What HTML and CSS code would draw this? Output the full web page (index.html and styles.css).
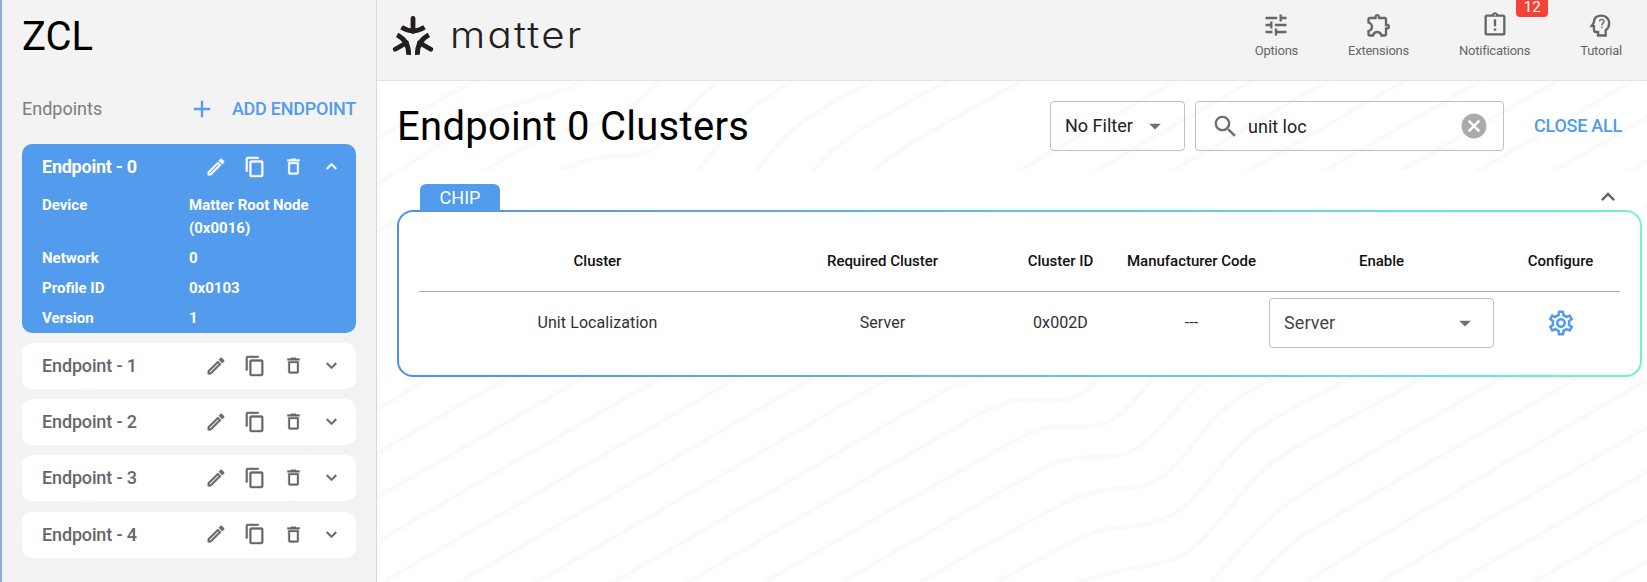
FILE: index.html
```html
<!DOCTYPE html>
<html lang="en">
<head>
<meta charset="utf-8">
<title>ZCL</title>
<link rel="stylesheet" href="styles.css">
</head>
<body>
<svg class="symbols" aria-hidden="true">
  <symbol id="edit" viewBox="0 0 24 24"><path d="M14.06 9.02l.92.92L5.92 19H5v-.92l9.06-9.06M17.66 3c-.25 0-.51.1-.7.29l-1.83 1.83 3.75 3.75 1.83-1.83c.39-.39.39-1.02 0-1.41l-2.34-2.34c-.2-.2-.45-.29-.71-.29zm-3.6 3.19L3 17.25V21h3.75L17.81 9.94l-3.75-3.75z"/></symbol>
  <symbol id="copy" viewBox="0 0 24 24"><path d="M16 1H4c-1.1 0-2 .9-2 2v14h2V3h12V1zm3 4H8c-1.1 0-2 .9-2 2v14c0 1.1.9 2 2 2h11c1.1 0 2-.9 2-2V7c0-1.1-.9-2-2-2zm0 16H8V7h11v14z"/></symbol>
  <symbol id="trash" viewBox="0 0 24 24"><path d="M6 19c0 1.1.9 2 2 2h8c1.1 0 2-.9 2-2V7H6v12zM8 9h8v10H8V9zm7.5-5l-1-1h-5l-1 1H5v2h14V4h-3.500z"/></symbol>
  <symbol id="down" viewBox="0 0 24 24"><path d="M7.410 8.590L12 13.170l4.590-4.580L18 10l-6 6-6-6 1.410-1.410z"/></symbol>
  <symbol id="up" viewBox="0 0 24 24"><path d="M7.410 15.410L12 10.830l4.590 4.580L18 14l-6-6-6 6z"/></symbol>
  <symbol id="caret" viewBox="0 0 24 24"><path d="M7 10l5 5 5-5z"/></symbol>
</svg>
<div class="app">
  <svg class="waves" viewBox="0 0 1647 582" aria-hidden="true"><g id="waves"></g></svg>
  <aside class="sidebar">
    <h1 class="brand">ZCL</h1>
    <div class="list-head">
      <span class="list-title">Endpoints</span>
      <button class="add"><svg class="plus" viewBox="0 0 24 24"><path d="M19 13h-6v6h-2v-6H5v-2h6V5h2v6h6v2z"/></svg>ADD ENDPOINT</button>
    </div>
    <section class="endpoint active">
      <div class="endpoint-head"><span class="name">Endpoint - 0</span><svg class="i-edit"><use href="#edit"/></svg><svg class="i-copy"><use href="#copy"/></svg><svg class="i-trash"><use href="#trash"/></svg><svg class="i-arrow"><use href="#up"/></svg></div>
      <dl class="details">
        <dt>Device</dt><dd>Matter Root Node (0x0016)</dd>
        <dt>Network</dt><dd>0</dd>
        <dt>Profile ID</dt><dd>0x0103</dd>
        <dt>Version</dt><dd>1</dd>
      </dl>
    </section>
    <section class="endpoint"><div class="endpoint-head"><span class="name">Endpoint - 1</span><svg class="i-edit"><use href="#edit"/></svg><svg class="i-copy"><use href="#copy"/></svg><svg class="i-trash"><use href="#trash"/></svg><svg class="i-arrow"><use href="#down"/></svg></div></section>
    <section class="endpoint"><div class="endpoint-head"><span class="name">Endpoint - 2</span><svg class="i-edit"><use href="#edit"/></svg><svg class="i-copy"><use href="#copy"/></svg><svg class="i-trash"><use href="#trash"/></svg><svg class="i-arrow"><use href="#down"/></svg></div></section>
    <section class="endpoint"><div class="endpoint-head"><span class="name">Endpoint - 3</span><svg class="i-edit"><use href="#edit"/></svg><svg class="i-copy"><use href="#copy"/></svg><svg class="i-trash"><use href="#trash"/></svg><svg class="i-arrow"><use href="#down"/></svg></div></section>
    <section class="endpoint"><div class="endpoint-head"><span class="name">Endpoint - 4</span><svg class="i-edit"><use href="#edit"/></svg><svg class="i-copy"><use href="#copy"/></svg><svg class="i-trash"><use href="#trash"/></svg><svg class="i-arrow"><use href="#down"/></svg></div></section>
  </aside>
  <main class="main">
    <header class="topbar">
      <svg class="logo" viewBox="0 0 42 40"><g id="arm" fill="none" stroke="#231f20" stroke-width="4.800"><path d="M21 3.500v13" stroke-linecap="round"/><path d="M9.500 12.300Q21 19.500 32.500 12.300"/></g><use href="#arm" transform="rotate(120 21 24)"/><use href="#arm" transform="rotate(240 21 24)"/></svg>
      <span class="wordmark">matter</span>
      <nav class="tools">
        <a class="tool"><svg viewBox="0 0 24 24"><path d="M3 17v2h6v-2H3zM3 5v2h10V5H3zm10 16v-2h8v-2h-8v-2h-2v6h2zM7 9v2H3v2h4v2h2V9H7zm14 4v-2H11v2h10zm-6-4h2V7h4V5h-4V3h-2v6z"/></svg>Options</a>
        <a class="tool"><svg viewBox="0 0 24 24"><path d="M10.500 4.500c.28 0 .5.220.5.500v2h6v6h2c.28 0 .5.220.5.500s-.220.500-.5.500h-2v6h-2.120c-.680-1.750-2.390-3-4.380-3s-3.700 1.250-4.380 3H4v-2.120c1.750-.680 3-2.390 3-4.380 0-1.990-1.240-3.700-2.990-4.380L4 7h6V5c0-.280.220-.5.500-.5m0-2C9.120 2.500 8 3.620 8 5H4c-1.100 0-1.990.9-1.990 2v3.800h.29c1.490 0 2.700 1.210 2.700 2.700s-1.210 2.700-2.700 2.700H2V20c0 1.100.9 2 2 2h3.800v-.3c0-1.490 1.210-2.700 2.700-2.700s2.700 1.210 2.700 2.700v.3H17c1.100 0 2-.9 2-2v-4c1.380 0 2.500-1.120 2.500-2.500S20.380 11 19 11V7c0-1.100-.9-2-2-2h-4c0-1.380-1.120-2.500-2.500-2.500z"/></svg>Extensions</a>
        <a class="tool"><svg viewBox="0 0 24 24"><path d="M11 15h2v2h-2zm0-8h2v6h-2zm8-4h-4.180C14.400 1.840 13.300 1 12 1s-2.400.84-2.820 2H5c-1.100 0-2 .9-2 2v14c0 1.100.9 2 2 2h14c1.100 0 2-.9 2-2V5c0-1.100-.9-2-2-2zm-7-.25c.41 0 .75.340.75.750s-.340.750-.750.750-.750-.340-.750-.750.340-.750.750-.750zM19 19H5V5h14v14z"/></svg>Notifications<span class="badge">12</span></a>
        <a class="tool"><svg viewBox="0 0 24 24"><path d="M9.500 21v-3H8q-2 0-2-2v-3H4l2-3.500C6 5.500 9 4 12.500 4c4 0 6.500 3 6.500 6.500 0 3-1.300 4.700-3 6V21z" fill="none" stroke="currentColor" stroke-width="2"/><path d="M10.800 9c.1-2.500 3.800-2.400 3.700 0 0 1.500-1.800 1.700-1.800 3.500M12.700 13.500v1.200" fill="none" stroke="currentColor" stroke-width="1.200"/></svg>Tutorial</a>
      </nav>
    </header>
    <div class="titlebar">
      <h2 class="title">Endpoint 0 Clusters</h2>
      <div class="field filter"><span>No Filter</span><svg><use href="#caret"/></svg></div>
      <div class="field search"><svg class="magnifier" viewBox="0 0 24 24"><path d="M15.500 14h-.790l-.280-.270C15.410 12.590 16 11.110 16 9.500 16 5.910 13.090 3 9.500 3S3 5.910 3 9.500 5.910 16 9.500 16c1.610 0 3.090-.590 4.230-1.570l.270.280v.790l5 4.990L20.490 19l-4.990-5zm-6 0C7.010 14 5 11.990 5 9.500S7.010 5 9.500 5 14 7.010 14 9.500 11.990 14 9.500 14z"/></svg><span>unit loc</span><svg class="clear" viewBox="0 0 24 24"><path d="M12 2C6.470 2 2 6.470 2 12s4.470 10 10 10 10-4.470 10-10S17.530 2 12 2zm5 13.590L15.590 17 12 13.410 8.410 17 7 15.590 10.590 12 7 8.410 8.410 7 12 10.590 15.590 7 17 8.410 13.410 12 17 15.590z"/></svg></div>
      <button class="close-all">CLOSE ALL</button>
    </div>
    <div class="domain">
      <div class="domain-head"><span class="tab">CHIP</span><svg><use href="#up"/></svg></div>
      <div class="card"><div class="card-body">
        <div class="row head"><span>Cluster</span><span>Required Cluster</span><span>Cluster ID</span><span>Manufacturer Code</span><span>Enable</span><span>Configure</span></div>
        <div class="row"><span>Unit Localization</span><span>Server</span><span>0x002D</span><span>---</span><div class="field enable"><span>Server</span><svg><use href="#caret"/></svg></div><svg class="gear" viewBox="0 0 24 24"><path d="M19.430 12.980c.04-.320.070-.640.070-.980 0-.340-.030-.660-.070-.980l2.110-1.650c.190-.150.240-.420.120-.640l-2-3.460c-.090-.160-.260-.250-.440-.250-.060 0-.120.010-.170.030l-2.490 1c-.520-.400-1.080-.730-1.690-.980l-.380-2.650C14.460 2.180 14.250 2 14 2h-4c-.250 0-.460.180-.490.420l-.380 2.650c-.610.250-1.170.590-1.690.980l-2.490-1c-.060-.020-.120-.030-.180-.030-.170 0-.340.090-.430.250l-2 3.460c-.130.220-.070.490.120.640l2.110 1.650c-.040.320-.070.650-.070.980 0 .330.030.660.070.980l-2.110 1.650c-.190.150-.240.420-.120.640l2 3.460c.090.160.260.250.440.250.060 0 .120-.010.170-.030l2.490-1c.520.400 1.080.730 1.690.980l.380 2.650c.030.240.240.420.490.420h4c.250 0 .460-.180.490-.420l.380-2.650c.610-.250 1.170-.590 1.690-.980l2.490 1c.060.020.120.030.180.030.170 0 .340-.090.430-.250l2-3.460c.120-.220.070-.490-.120-.640l-2.110-1.650zm-1.980-1.710c.040.310.050.520.050.730 0 .210-.020.430-.050.730l-.140 1.130.89.700 1.080.840-.7 1.210-1.270-.510-1.040-.420-.9.680c-.430.320-.840.560-1.250.730l-1.060.430-.160 1.130-.200 1.350h-1.400l-.190-1.350-.160-1.130-1.060-.430c-.430-.180-.830-.410-1.230-.710l-.91-.7-1.060.430-1.270.510-.7-1.210 1.080-.840.89-.7-.140-1.130c-.030-.310-.050-.540-.050-.740s.020-.430.050-.730l.140-1.130-.89-.7-1.080-.840.7-1.210 1.270.510 1.040.420.9-.680c.430-.320.840-.560 1.250-.730l1.060-.430.160-1.130.200-1.350h1.390l.190 1.350.160 1.130 1.060.430c.430.180.830.410 1.230.710l.91.700 1.060-.430 1.270-.510.7 1.210-1.070.850-.89.700.140 1.130zM12 8c-2.210 0-4 1.790-4 4s1.790 4 4 4 4-1.790 4-4-1.790-4-4-4zm0 6c-1.100 0-2-.9-2-2s.9-2 2-2 2 .9 2 2-.9 2-2 2z"/></svg></div>
      </div></div>
    </div>
  </main>
</div>
<script src="waves.js"></script>
</body>
</html>
```

FILE: styles.css
```css
* { box-sizing: border-box; }
body { margin: 0; font-family: Roboto, "Liberation Sans", sans-serif; color: #000; overflow: hidden; }
svg { fill: currentColor; flex: none; display: block; }
h1, h2, dl, dd { margin: 0; font-weight: 400; }
button { border: 0; background: none; padding: 0; font: 500 18px/24px Roboto, sans-serif; letter-spacing: -.25px; color: #539bed; }
.symbols { position: absolute; width: 0; height: 0; }
.app { position: relative; display: flex; width: 1647px; height: 582px; background: #fff; }
.waves { position: absolute; inset: 0; width: 1647px; height: 582px; }
#waves { fill: none; stroke: #000; stroke-opacity: .02; stroke-width: 5; stroke-linejoin: round; }
.sidebar { position: relative; width: 377px; border-left: 2px solid #91afd6; border-right: 1px solid #d8d8d8; background: rgba(241,241,241,.85); padding: 13px 20px 0; display: flex; flex-direction: column; }
.brand { font-size: 40px; line-height: 48px; height: 48px; }
.list-head { display: flex; justify-content: space-between; align-items: center; height: 24px; margin: 36px 0 23px; }
.list-title { font-size: 18px; line-height: 22px; color: #7d7d7d; }
.add { display: flex; align-items: center; gap: 16px; }
.plus { width: 28px; height: 28px; }
.endpoint { height: 46px; border-radius: 10px; background: #fff; color: #666669; margin-bottom: 10.200px; flex: none; }
.endpoint.active { height: 189px; background: #539bed; color: #fff; margin-bottom: 10px; }
.endpoint-head { height: 45px; padding-left: 20px; display: flex; align-items: center; }
.endpoint-head svg { stroke: currentColor; stroke-width: .4; }
.name { font-size: 18px; font-weight: 500; width: 163px; letter-spacing: -.15px; }
.active .name { font-weight: 700; letter-spacing: -.25px; }
.i-edit { width: 22px; height: 22px; }
.i-copy { width: 22px; height: 22px; margin-left: 17px; }
.i-trash { width: 21px; height: 21px; margin-left: 17px; }
.i-arrow { width: 21px; height: 21px; margin-left: 17px; }
.details { display: grid; grid-template-columns: 147px 140px; row-gap: 7px; padding-left: 20px; margin-top: 5px; font-size: 15px; line-height: 23px; font-weight: 700; }
.details dd { font-weight: 700; }
.main { position: relative; flex: 1; min-width: 0; }
.topbar { height: 81px; background: rgba(241,241,241,.85); border-bottom: 1px solid #e2e2ea; display: flex; padding: 0 25px 0 15px; }
.logo { width: 42px; height: 40px; margin-top: 15px; }
.wordmark { font: 300 36px/60px Inter, Lato, sans-serif; font-feature-settings: "cv11" 1, "ss03" 1; color: #231f20; margin: 5px 0 0 16px; letter-spacing: 2px; transform: scaleX(1.12); transform-origin: left; }
.tools { margin-left: auto; display: flex; gap: 50px; }
.tool { position: relative; display: flex; flex-direction: column; align-items: center; font-size: 13px; line-height: 23px; letter-spacing: -.24px; color: #666669; padding-top: 11px; }
.tool svg { width: 28px; height: 28px; }
.badge { position: absolute; top: -6px; right: -18px; width: 32px; height: 23px; border-radius: 4px; background: #f44336; color: #fff; font-size: 15px; line-height: 26px; letter-spacing: 0; text-align: center; }
.titlebar { height: 90px; padding: 0 25px 0 20px; display: flex; align-items: center; }
.title { font-size: 40px; line-height: 48px; letter-spacing: .28px; margin: 2px auto 0 0; }
.field { height: 50px; border: 1px solid #bfbfbf; border-radius: 4px; display: flex; align-items: center; font-size: 18px; color: #222; }
.field svg { color: #6f6f6f; width: 28px; height: 28px; }
.filter { width: 135px; padding-left: 14px; gap: 8px; }
.filter span { margin-bottom: 1px; }
.search { width: 309px; margin: 0 30px 0 10px; padding: 0 15px; }
.search .magnifier { width: 29px; height: 29px; margin-right: 8px; }
.search .clear { width: 30px; height: 30px; margin-left: auto; color: #ababab; margin-right: -1px; }
.domain { background: #fff; margin-left: 20px; width: 1245px; }
.domain-head { height: 39px; padding: 13px 20px 0 23px; display: flex; justify-content: space-between; align-items: flex-start; color: #666669; }
.domain-head svg { width: 28px; height: 28px; margin-top: -1px; }
.tab { width: 80px; height: 27px; border-radius: 6px 6px 0 0; background: #539bed; color: #fff; font-size: 18px; line-height: 27px; text-align: center; }
.card { height: 167px; padding: 2px; border-radius: 16px; background: linear-gradient(90deg, #4d8ff0, #71f3cd); }
.card-body { height: 163px; border-radius: 14px; background: #fff; padding: 19px 20px; }
.row { display: grid; grid-template-columns: 357px 213px 143px 119px 261px 97px; align-items: center; justify-items: center; height: 62px; font-size: 16px; letter-spacing: .08px; color: #303030; white-space: nowrap; }
.row > span { margin-bottom: 2px; }
.row.head { height: 61px; font-size: 15px; letter-spacing: -.03px; font-weight: 500; color: #111; border-bottom: 1px solid #ababab; }
.row.head > span { margin-bottom: 0; }
.enable { width: 225px; padding: 0 14px; justify-content: space-between; color: #444; }
.enable span { margin-bottom: 2px; }
.gear { width: 30px; height: 30px; color: #539bed; }
```

FILE: waves.js
```js
// Contour lines: each entry is a list of x,y points joined by a smooth curve.
const bent = [
  [376,140, 427,107, 470,83, 540,60, 590,30, 625,0],
  [376,185, 437,147, 490,110, 543,97, 583,83, 617,57, 637,27, 663,0],
  [376,232, 485,171, 530,143, 570,128, 603,123, 637,103, 663,77, 690,40, 730,3],
  [560,171, 587,159, 610,156, 643,156, 663,143, 673,127, 693,103, 727,73, 750,43, 790,17, 816,0],
  [640,240, 697,171, 717,147, 743,113, 790,82, 843,50, 937,0],
  [700,240, 757,171, 780,140, 813,113, 870,82, 1014,0],
  [755,240, 812,171, 843,140, 893,110, 950,80, 1090,0],
  [790,240, 872,171, 910,143, 1023,80, 1162,0],
  [614,582, 940,393, 960,383, 977,380, 1000,366],
  [688,582, 973,417, 997,405, 1021,399, 1062,402, 1087,392, 1097,380, 1110,350],
  [765,582, 1021,435, 1050,426, 1091,428, 1115,420, 1135,400, 1152,380, 1170,350],
  [842,582, 1042,467, 1074,457, 1115,458, 1140,448, 1164,423, 1184,400, 1205,380, 1230,355],
  [920,582, 1062,502, 1099,490, 1140,488, 1164,477, 1188,452, 1209,423, 1233,400, 1270,380, 1320,350],
  [997,582, 1078,538, 1107,528, 1156,524, 1184,508, 1209,480, 1241,442, 1274,418, 1347,380, 1399,350],
  [1078,582, 1119,570, 1172,562, 1201,543, 1225,513, 1262,470, 1294,447, 1421,380, 1473,350],
  [1211,582, 1233,557, 1274,513, 1315,485, 1498,380, 1550,350],
  [1254,582, 1282,550, 1315,527, 1575,380, 1627,350],
  [1306,582, 1339,560, 1647,380]
];

// Straight diagonals fill the areas on both sides of the ripple.
const straight = [];
const slope = 1.73;
for (let i = 0; i < 17; i++) {
  const x = 1019 + i * 76.4;
  straight.push([x - 90, 171 + 52, x + 171 * slope, 0]);
}
for (let i = 0; i < 4; i++) {
  straight.push([1380 + i * 77, 582, 1380 + i * 77 + 240 * slope, 342]);
}
for (let i = 0; i < 7; i++) {
  const x = 427 + i * 76.5;
  straight.push([x - 202 * slope, 582, x + 52, 350]);
}
for (let i = -9; i < 9; i++) {
  const x = 427 + i * 76.5;
  const top = Math.min(376, x + 380 * slope);
  straight.push([x - 202 * slope, 582, top, 380 - (top - x) / slope]);
}

function smooth(p) {
  let d = `M${p[0]} ${p[1]}`;
  for (let i = 2; i < p.length - 2; i += 2) {
    d += `Q${p[i]} ${p[i + 1]} ${(p[i] + p[i + 2]) / 2} ${(p[i + 1] + p[i + 3]) / 2}`;
  }
  return d + `L${p[p.length - 2]} ${p[p.length - 1]}`;
}

const group = document.getElementById('waves');
for (const points of [...bent, ...straight]) {
  const path = document.createElementNS('http://www.w3.org/2000/svg', 'path');
  path.setAttribute('d', smooth(points));
  group.appendChild(path);
}
```
